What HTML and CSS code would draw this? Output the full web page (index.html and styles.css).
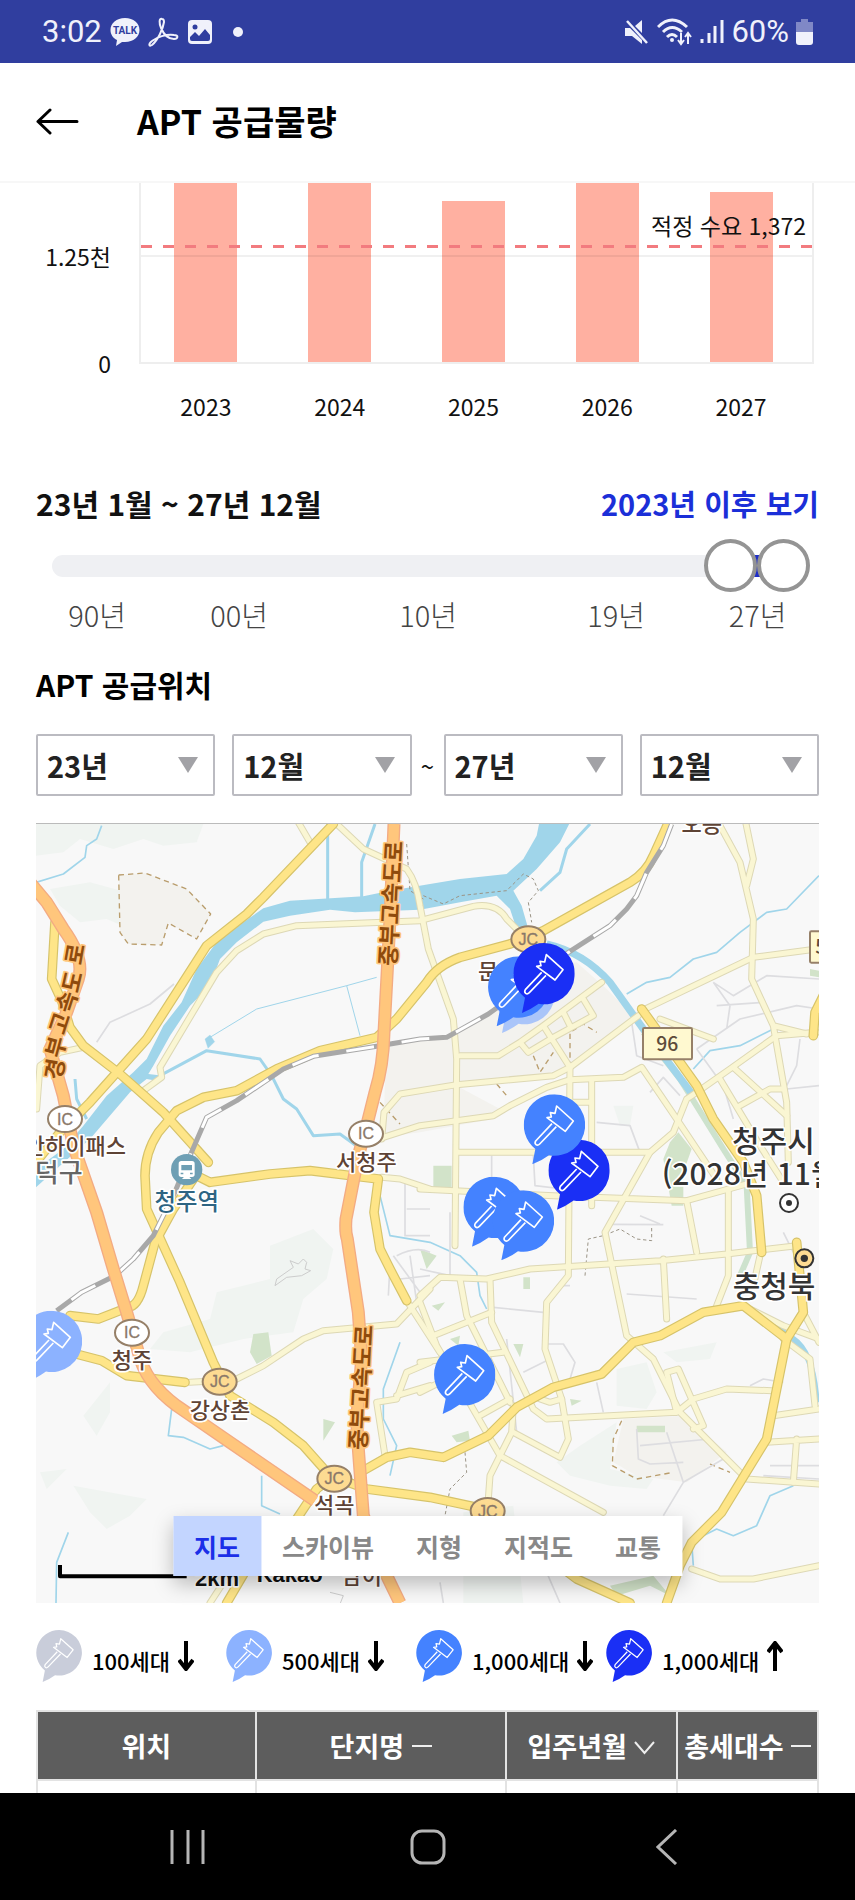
FILE: index.html
```html
<!DOCTYPE html>
<html lang="ko">
<head>
  <meta charset="UTF-8" />
  <meta name="viewport" content="width=device-width, initial-scale=1.0"/>
  <title>APT 공급물량</title>
  <link rel="stylesheet" href="styles.css">
</head>
<body>

  <!-- Shared pin symbol -->
  <svg class="defs" aria-hidden="true">
    <symbol id="pin" viewBox="0 0 184 210">
      <path fill="currentColor" d="M92 0a92 92 0 1 1-16 182.500Q52 200 26 210L35 164A92 92 0 0 1 92 0z"/>
      <path fill="none" stroke="#fff" stroke-width="5" stroke-linejoin="round" d="M99 35L149 80L125 111L70 70L83 68L80 55L94 57ZM85 88L36 140Q32 147 37 151Q42 155 48 149L98 97"/>
    </symbol>
  </svg>

  <div class="statusbar">
    <div class="status-left">
      <span>3:02</span>
      <svg class="talk" width="30" height="28" viewBox="0 0 30 28">
        <path fill="#f0f1fb" d="M15 0C23.500 0 29.500 5.300 29.500 12S23.500 24 15 24l-3 0L6 28l1-6C3 20 .5 16.500 .5 12 .5 5.300 6.500 0 15 0z"/>
        <text x="15" y="16" text-anchor="middle">TALK</text>
      </svg>
      <svg width="31" height="30" viewBox="0 0 31 30" fill="none" stroke="#f0f1fb" stroke-width="2">
        <path d="M14 2c-3-1-3 4-1 9 3 7 8 11 13 11 4 0 5-4 0-4-8-1-17 2-22 6-4 3-3 6 0 4C10 23 15 12 16 5c0-2-1-3-2-3z"/>
      </svg>
      <svg width="26" height="26" viewBox="0 0 26 26">
        <rect x="1" y="1" width="24" height="24" rx="4" fill="#f0f1fb"/>
        <circle cx="8" cy="8" r="2.500" fill="#303e9f"/>
        <path d="M3 18l5-5 4 4 6-7 5 6v4q0 2-2 2H5q-2 0-2-2z" fill="#303e9f"/>
      </svg>
      <i class="dot"></i>
    </div>
    <div class="status-right">
      <svg width="26" height="26" viewBox="0 0 26 26" fill="#f0f1fb">
        <path d="M1 9h5l3 3 9 9v4L8 17H1zM11 7l7-6v13z"/>
        <path d="M3 2l20 22" stroke="#f0f1fb" stroke-width="2.500"/>
      </svg>
      <svg width="36" height="28" viewBox="0 0 36 28" fill="none" stroke="#f0f1fb" stroke-width="3">
        <path d="M1 9q14-14 29 0M6 14q9-9 19 0M10 19q5-5 10 0"/>
        <circle cx="15" cy="22" r="2" fill="#f0f1fb" stroke="none"/>
        <path stroke-width="2" d="M24 15v10M21 22l3 4 3-4M31 26V16M28 19l3-4 3 4"/>
      </svg>
      <svg width="24" height="26" viewBox="0 0 24 26" stroke="#f0f1fb" stroke-width="3">
        <path d="M2 20v4M9 14v10M15 7v17M22 1v23"/>
      </svg>
      <span>60%</span>
      <svg width="17" height="26" viewBox="0 0 17 26">
        <path d="M5 0h7v3h5v10H0V3h5z" fill="#8088c6"/>
        <path d="M0 13h17v10q0 3-3 3H3q-3 0-3-3z" fill="#f0f1fb"/>
      </svg>
    </div>
  </div>

  <header>
    <button class="back" aria-label="뒤로">
      <svg width="43" height="27" viewBox="0 0 43 27" fill="none" stroke="#000" stroke-width="3" stroke-linecap="round" stroke-linejoin="round">
        <path d="M41 13.500H2M14 2L2 13.500 14 25"/>
      </svg>
    </button>
    <h1>APT 공급물량</h1>
  </header>

  <main>
    <!-- Chart -->
    <section class="chart">
      <div class="axis"><span>1.25천</span><span>0</span></div>
      <div class="plot">
        <div class="bar" style="height: 100%"></div>
        <div class="bar" style="height: 100%"></div>
        <div class="bar" style="height: 90%"></div>
        <div class="bar" style="height: 100%"></div>
        <div class="bar" style="height: 95%"></div>
        <div class="gridline"></div>
        <svg class="demand" width="100%" height="3"><path d="M0 1.500H2000"/></svg>
        <span class="demand-label">적정 수요 1,372</span>
      </div>
      <div class="years">
        <span>2023</span><span>2024</span><span>2025</span><span>2026</span><span>2027</span>
      </div>
    </section>

    <!-- Range -->
    <section>
      <div class="range-head">
        <h2>23년 1월 ~ 27년 12월</h2>
        <a href="#">2023년 이후 보기</a>
      </div>
      <div class="slider">
        <div class="track"><span></span></div>
        <input type="range" min="0" max="40" value="37" aria-label="시작">
        <input type="range" min="0" max="40" value="40" aria-label="끝">
      </div>
      <div class="ticks">
        <span>90년</span><span>00년</span><span>10년</span><span>19년</span><span>27년</span>
      </div>
    </section>

    <!-- Location -->
    <section>
      <h2 class="place">APT 공급위치</h2>
      <div class="selects">
        <div class="pair">
          <label class="select"><select aria-label="시작 연도"><option>23년</option></select></label>
          <label class="select"><select aria-label="시작 월"><option>12월</option></select></label>
        </div>
        <span class="tilde">~</span>
        <div class="pair">
          <label class="select"><select aria-label="종료 연도"><option>27년</option></select></label>
          <label class="select"><select aria-label="종료 월"><option>12월</option></select></label>
        </div>
      </div>

      <div class="map">
        <svg viewBox="18 15 2349 2337" preserveAspectRatio="xMidYMid slice">
          <defs>
            <g id="highway">
              <path d="M0 190L50 250 100 330Q165 420 145 480L110 580 60 690 100 830 130 980 200 1180 250 1350 290 1480 325 1600Q345 1690 440 1760L600 1870 855 2045"/>
              <path d="M1092 15L1080 300 1062 640Q1060 740 1035 820L1010 920 985 1010 948 1200Q945 1240 952 1260L985 1480 995 1620 980 1800 985 1890 1000 2090 1070 2270 1110 2352"/>
            </g>
            <g id="major">
              <path d="M910 15L700 235 650 285 530 380 350 660 180 850 90 940 18 1030"/>
              <path d="M75 310L65 480 95 545 120 625 160 680 270 765 400 880 535 1030"/>
              <path d="M480 1060L540 1090 720 1065 840 1055 1045 1080 1032 1180 1050 1290 1080 1350 1130 1445"/>
              <path d="M1920 0L1870 110Q1850 160 1800 190L1540 335 1440 375 1290 415Q1220 440 1190 490L1100 600 1040 655 870 695 740 750 620 815 520 835 440 875 385 940Q345 1000 345 1070L350 1170 450 1390 550 1630 600 1730 730 1810 820 1880 900 1970 1010 2010 1200 2035 1340 2065"/>
              <path d="M490 1080L430 1170 375 1270 340 1400Q325 1460 295 1465L205 1500 120 1490"/>
              <path d="M120 1600L215 1625 290 1670 465 1690"/>
              <path d="M800 2100L860 2010 900 1980M1000 1955L1070 1915 1140 1900 1240 1915 1375 1850 1460 1765 1570 1705 1715 1665 1810 1570 1890 1550 2020 1480 2140 1460 2270 1560"/>
              <path d="M2300 1270L2320 1480 2270 1560 2210 1860 2075 2080 1985 2170 1950 2240 1910 2352"/>
              <path d="M1835 570L1900 660 2000 800 2050 900 2140 1030 2180 1130 2195 1300"/>
              <path d="M1600 2250L1640 2280 1800 2352M650 2250L590 2352M2350 650L2355 580 2380 530"/>
            </g>
            <g id="minor">
              <path d="M340 815L395 775 390 745 560 460 620 395 700 345 800 320 1170 305 1330 262Q1400 250 1430 300L1480 350"/>
              <path d="M915 10L1000 90 1130 150Q1160 190 1170 260L1195 390 1270 600 1280 720 1275 1280M805 10L840 70"/>
              <path d="M20 870L30 740 90 700 160 685M1055 960L1062 880 1110 825 1280 797 1570 770 1620 745 1825 590"/>
              <path d="M1060 955L1170 920 1390 890 1440 860 1550 805 1620 782 1780 775 1835 745 1940 900 2060 1080"/>
              <path d="M1290 710L1405 710 1470 670 1540 620 1715 490M1470 670L1495 700 1570 655 1690 590 1660 540M1540 620L1620 745M1600 580L1620 620"/>
              <path d="M1620 740L1615 1370 1550 1450 1545 1590 1595 1740 1615 1860 1590 1915 1450 1840M1685 785L1685 1160M1620 850L1685 850"/>
              <path d="M1280 1000L1860 1000 1930 940 1970 840 2000 820 2100 750 2240 650 2360 640M1835 575L2170 415 2360 390"/>
              <path d="M2070 20L2130 130 2170 300 2165 480 2230 620 2270 850 2275 1030M2145 0L2170 120 2150 200M2230 620L2330 645"/>
              <path d="M2110 745L2270 890M2070 780L2190 980 2260 1090M2130 860L2220 810 2260 810"/>
              <path d="M1170 1110L1570 1130 1970 1145 2150 1095M1860 1000L1725 1240 1790 1550 1870 1620 1950 1780 2150 1980 2367 1995"/>
              <path d="M1170 1430L1230 1375 1370 1380 1500 1350 1890 1325 2090 1305 2300 1280M1900 1320L1910 1500M1970 1145L2000 1300M2095 1110L2095 1370 2060 1460M2190 1310L2170 1400"/>
              <path d="M2150 1465L2260 1520 2367 1560M2320 1480L2367 1570M2260 1560L2340 1620 2355 1760"/>
              <path d="M1290 1380L1310 1490 1440 1750M1380 1380L1385 1510 1510 1770 1550 1800 1940 1780 1990 1740 2090 1710 2225 1715M1940 1780L1910 1660 1945 1650 2020 1820 1990 1830"/>
              <path d="M1170 1450L1220 1580 1410 1910 1720 2080M1170 1630L1420 1600M1210 1550L1385 1480M1170 1720L1230 1690M1450 1760L1445 1840 1410 1910 1380 1970 1375 2040M1350 1790L1440 1740M1530 1740L1560 1750 1595 1740"/>
              <path d="M2210 1870L2367 1860M2230 1790L2367 1770M2300 1860L2290 1990M1985 2250L2070 2280 2170 2280 2367 2240"/>
              <path d="M480 1690L560 1685 620 1680 700 1640 820 1560 880 1535 1100 1515 1200 1410M1130 1445L1230 1600M1040 1750L1100 1740 1130 1660 1200 1630M1040 1750L1065 1910M1100 1730L1200 1700M1055 1075L1110 1080 1200 1110"/>
              <path d="M600 2260L540 2352M1890 600L2050 660"/>
            </g>
          </defs>

          <!-- Land cover -->
          <g class="hill">
            <path d="M18 15H520L500 70 400 80 340 60 250 90 150 60 100 100 18 110zM60 210L180 190 290 220 300 330 230 300 150 310 90 260z"/>
            <path d="M720 1280L850 1230 910 1290 890 1380 820 1440 790 1540 640 1560 480 1600 360 1590 400 1540 540 1500 560 1420 720 1380zM160 1790L240 1690 240 1780 200 1850zM130 2000L350 2040 300 2090 230 2130 180 2080zM30 1960L110 1950 50 2010z"/>
            <path d="M1760 1650L1850 1630 1880 1720 1850 1770 1760 1760zM1900 1600L2060 1570 2040 1620 1940 1630zM1580 1930L1650 1880 1760 1810 1740 1950 1870 1980 1850 2010 1740 2000 1620 1970zM1300 2080L1450 2060 1480 2352H1300zM1750 860h60l-10 60h-30z"/>
          </g>
          <g class="zone">
            <path d="M1068 680L1170 665 1290 640 1400 570 1570 440 1640 430 1730 510 1810 590 1620 740 1500 780 1280 800 1410 870 1390 900 1170 940 1060 955z"/>
            <path class="dash" d="M266 168L345 162 470 210 542 285 500 360 415 312 395 378 295 375 270 340z"/>
            <path d="M1780 1800L1960 1790 2090 1900 1970 1990 1820 1970 1750 1930z"/>
            <path class="dash" fill="none" d="M1775 1805L1750 1860 1747 1940 1820 1980 1930 1960M2040 1935L2100 1960M1620 800V640L1660 615 1700 640M1510 710L1530 760 1570 700M1050 850L1110 915M1400 795L1430 830"/>
          </g>
          <g class="park">
            <path d="M670 1545L715 1540 725 1610 680 1635 660 1600zM880 1800L915 1810 880 1865zM1210 1040h55v70h-55zM1170 1290L1220 1310 1190 1350zM1920 970L1945 940 1985 990 1960 1060 1960 1160 1925 1160 1900 1020zM1480 1375h20v35h-20zM1450 1575h30l-10 40zM1260 1560l30-10-5 30zM1265 1850l50-15 5 30-40 5zM1820 1820h85v20h-85zM1620 1740l35 5-30 15zM1205 1460l40-10-20 25zM1740 2300L1870 2270 1920 2330 1860 2300 1760 2330zM2340 450l27 5v20l-27-5z"/>
          </g>

          <!-- Water -->
          <g class="water">
            <path d="M18 1050L100 990 160 920 230 830 310 760 350 720 400 620 455 550 500 450 560 370 640 310 700 268 780 245 1000 232 1080 215 1200 195 1290 180 1430 165 1480 120 1520 50 1530 0H1625L1590 70 1520 150 1450 215 1475 260 1495 330H1460L1440 270 1400 230 1290 250 1170 272 975 280 900 272 780 290 700 308 620 370 570 420 540 500 480 560 420 650 370 740 355 765 400 770 380 785 350 780 300 820 180 960 18 1105z"/>
          </g>
          <path class="bank" d="M1840 640L1950 780 2080 990 2150 1100 2160 1300 2130 1370"/>
          <g class="stream">
            <path stroke-width="22" d="M1550 375Q1660 400 1740 490L1840 630 1990 830"/>
            <path stroke-width="9" d="M893 15V240M1035 15L995 130V240M390 770L530 695 690 720 725 770 760 840 800 870 850 950 930 945 985 985M1680 15L1610 90 1590 160 1530 215M135 780L140 840 170 900"/>
            <path stroke-width="5" d="M18 190L100 165 165 115 170 80 200 60 215 20M1790 525L1850 490 1920 475 1990 420 2060 400 2130 340 2210 280 2270 270 2367 170M1990 750L2040 695 2130 680 2230 630"/>
            <path stroke-width="3" d="M540 655L680 570 950 500 1040 475M950 500L990 650"/>
            <path stroke-width="5" d="M1050 1130L1080 1250 1200 1270 1290 1310 1340 1360 1350 1430 1370 1470M425 1770L415 1850 460 1855 540 1890 580 1880M695 1970L695 2060 750 2085M115 2140L80 2230 78 2352M1110 1570L1060 1710 1060 1800 1100 1880 1080 1970M2000 2160L2060 2130 2110 2150 2180 2120 2220 2030 2290 2000M1985 2170L1990 2240"/>
            <path stroke-width="18" d="M2200 1500L2290 1560Q2350 1600 2360 1750"/>
            <path d="M525 660l15-12 14 20-20 20z" fill="#a0d5ea"/>
          </g>

          <!-- Roads -->
          <path class="street" d="M432 495L360 555 240 610 200 670M1260 1180V1370L1170 1350M1385 1010V1100M1510 1010L1515 1100 1600 1110M1700 910L1800 920 1830 1000M1830 1190L1890 1215M1740 1216L1900 1217M1790 1425L2000 1440M1390 1465L1540 1480M1550 1575L1600 1575 1635 1630 1620 1680M1700 1690L1720 1780M1350 1130V1200M2050 490L2100 560 2090 630M2050 490L2110 530 2210 470 2367 480M2060 560L2200 550M2000 690L2130 600 2300 560 2367 570M2000 690L2080 800 2110 900M1805 610L1820 710 1900 740M1860 820L1900 775 1950 830M2270 810L2367 800M1820 1830L1825 1920 1860 1935 1960 1930M1910 1840L1960 1990 2080 1920M1830 1880L2040 1860M1960 1990L1900 2090M2220 1940H2367M2200 1970L2367 1980M2160 1700L2200 1680 2260 1690M1100 1310Q1160 1280 1200 1300M1090 1310L1170 1420M1080 1340L1075 1430M1110 1380L1200 1370M1140 1310L1160 1450M1125 1080V1250H1200M1130 1170H1200M1580 1400H1620M1430 1560L1460 1840M1480 1660L1560 1620M2260 1240L2290 1300M1230 2290L1240 2352M1550 2260L1590 2352M2310 660L2300 740 2270 800"/>
          <path class="hill-line" d="M735 1400L740 1380 790 1345 780 1325 805 1335 820 1320 830 1330 825 1350 842 1355 815 1370 770 1375zM900 2320l40 10-10 25"/>
          <path class="trail" d="M1180 230L1240 255 1290 230 1430 215 1480 165 1510 180 1525 215 1495 250 1505 310M1130 75L1140 215 1180 240M1305 1900L1310 1960 1260 2010 1245 2090M1665 1370L1675 1260 1720 1250 1770 1230 1820 1260 1865 1265V1220"/>
          <use href="#minor" class="minor-case"/><use href="#minor" class="minor"/>
          <use href="#major" class="major-case"/><use href="#major" class="major"/>
          <g class="rail">
            <path d="M1925 15L1900 80 1850 160 1820 230 1790 270 1740 320 1600 410 1480 510 1375 585 1250 655 1170 660 1040 682 850 712 760 750 620 845 530 895 480 1010 430 1130 370 1250 310 1320 255 1370 155 1420 80 1475"/>
            <path class="sleepers" d="M1925 15L1900 80 1850 160 1820 230 1790 270 1740 320 1600 410 1480 510 1375 585 1250 655 1170 660 1040 682 850 712 760 750 620 845 530 895 480 1010 430 1130 370 1250 310 1320 255 1370 155 1420 80 1475"/>
          </g>
          <use href="#highway" class="highway-case"/><use href="#highway" class="highway"/>

          <!-- Labels -->
          <g class="road-name">
            <text transform="translate(1098 442) rotate(-87)">중부고속도로</text>
            <text transform="translate(1008 1894) rotate(-87)">중부고속도로</text>
            <text transform="translate(94 785) rotate(-80)">경</text>
            <text transform="translate(94 720) rotate(-75)">부</text>
            <text transform="translate(103 650) rotate(-72)">고</text>
            <text transform="translate(124 586) rotate(-72)">속</text>
            <text transform="translate(144 524) rotate(-77)">도</text>
            <text transform="translate(154 440) rotate(-80)">로</text>
          </g>
          <g class="badge">
            <g class="ic"><ellipse cx="105" cy="900" rx="51" ry="39"/><ellipse cx="1008" cy="944" rx="51" ry="39"/><ellipse cx="306" cy="1541" rx="51" ry="39"/></g>
            <g class="jc"><ellipse cx="1495" cy="361" rx="51" ry="39"/><ellipse cx="569" cy="1688" rx="51" ry="39"/><ellipse cx="913" cy="1979" rx="51" ry="39"/><ellipse cx="1373" cy="2076" rx="51" ry="39"/></g>
            <text x="105" y="917">IC</text><text x="1008" y="961">IC</text><text x="306" y="1558">IC</text>
            <text x="1495" y="378">JC</text><text x="569" y="1705">JC</text><text x="913" y="1996">JC</text><text x="1373" y="2093">JC</text>
          </g>
          <g class="route">
            <rect x="1839" y="627" width="147" height="94" rx="4"/><rect x="2340" y="337" width="100" height="94" rx="4"/>
            <text x="1912" y="697">96</text><text x="2372" y="406">5</text>
          </g>
          <circle cx="470" cy="1052" r="47" fill="#6e9fb4"/>
          <path fill="#fff" d="M454 1026h32q8 0 8 8v32q0 8-8 8H454q-8 0-8-8v-32q0-8 8-8zM456 1080l8-8h12l8 8z"/>
          <path fill="#6e9fb4" d="M454 1038h32v16H454zM452 1061h8v5h-8zM480 1061h8v5h-8z"/>
          <g class="place-name">
            <text x="136" y="1005">안하이패스</text>
            <text x="1009" y="1052">서청주</text>
            <text x="306" y="1648">청주</text>
            <text x="570" y="1796">강상촌</text>
            <text x="913" y="2083">석곡</text>
            <text x="995" y="2296">남이</text>
            <text x="2015" y="40">오동</text>
            <text x="1405" y="480" text-anchor="middle">문암</text>
            <text class="station" x="470" y="1174">청주역</text>
            <text class="gu" x="86" y="1090">덕구</text>
          </g>
          <g class="city">
            <text x="2106" y="998">청주시</text>
            <text x="1895" y="1097">(2028년 11월</text>
            <text x="2108" y="1435">충청북</text>
            <circle cx="2277" cy="1152" r="27"/><circle class="core" cx="2277" cy="1152" r="9"/>
            <circle class="province" cx="2323" cy="1318" r="27"/><circle class="core" cx="2323" cy="1318" r="11"/>
          </g>
          <path d="M90 2238V2272H470" fill="none" stroke="#000" stroke-width="12"/>
          <g class="scale"><text x="495" y="2300">2km</text><text x="680" y="2290">Kakao</text></g>

          <!-- Pins -->
          <use href="#pin" class="p500" x="1390" y="432" width="184" height="210" opacity=".7"/>
          <use href="#pin" class="p999" x="1374" y="412" width="184" height="210"/>
          <use href="#pin" class="p1000" x="1450" y="372" width="184" height="210"/>
          <use href="#pin" class="p1000" x="1555" y="962" width="184" height="210"/>
          <use href="#pin" class="p999" x="1481" y="826" width="184" height="210"/>
          <use href="#pin" class="p999" x="1300" y="1073" width="184" height="210"/>
          <use href="#pin" class="p999" x="1388" y="1114" width="184" height="210"/>
          <use href="#pin" class="p999" x="1212" y="1575" width="184" height="210"/>
          <use href="#pin" class="p500" x="-28" y="1475" width="184" height="210"/>
        </svg>
        <div class="map-tabs">
          <button class="active">지도</button>
          <button>스카이뷰</button>
          <button>지형</button>
          <button>지적도</button>
          <button>교통</button>
        </div>
      </div>

      <div class="legend">
        <div><svg class="p100" width="46" height="52"><use href="#pin"/></svg><span>100세대</span><svg class="arrow" width="16" height="30"><path d="M8 0V27M1 19l7 9 7-9"/></svg></div>
        <div><svg class="p500" width="46" height="52"><use href="#pin"/></svg><span>500세대</span><svg class="arrow" width="16" height="30"><path d="M8 0V27M1 19l7 9 7-9"/></svg></div>
        <div><svg class="p999" width="46" height="52"><use href="#pin"/></svg><span>1,000세대</span><svg class="arrow" width="16" height="30"><path d="M8 0V27M1 19l7 9 7-9"/></svg></div>
        <div><svg class="p1000" width="46" height="52"><use href="#pin"/></svg><span>1,000세대</span><svg class="arrow" width="16" height="30"><path d="M8 30V3M1 11l7-9 7 9"/></svg></div>
      </div>
    </section>

    <!-- List -->
    <table>
      <thead>
        <tr>
          <th class="w-area">위치</th>
          <th class="w-name">단지명 <svg width="20" height="12"><path d="M0 3H20"/></svg></th>
          <th class="w-date">입주년월 <svg width="21" height="14"><path d="M1 1L10.500 12 20 1"/></svg></th>
          <th class="w-total">총세대수 <svg width="20" height="12"><path d="M0 3H20"/></svg></th>
        </tr>
      </thead>
      <tbody>
        <tr><td></td><td></td><td></td><td></td></tr>
      </tbody>
    </table>
  </main>

  <nav>
    <button aria-label="최근 앱"><svg width="36" height="36"><path d="M2 1V35M18 1V35M33 1V35"/></svg></button>
    <button aria-label="홈"><svg width="36" height="36"><rect x="2" y="2" width="32" height="32" rx="10"/></svg></button>
    <button aria-label="뒤로"><svg width="22" height="36"><path d="M20 1L2 18 20 35"/></svg></button>
  </nav>
</body>
</html>
```
FILE: styles.css
```css
* {
  box-sizing: border-box;
}
body {
  font-family: "Noto Sans CJK KR", sans-serif;
  color: #111;
  background: #fff;
  margin: 0;
  height: 100vh;
  display: flex;
  flex-direction: column;
}
button {
  border: none;
  background: none;
  padding: 0;
  font-family: inherit;
  cursor: pointer;
}
svg {
  display: block;
  flex: none;
}
h1, h2 {
  margin: 0;
}
.defs {
  position: absolute;
  width: 0;
  height: 0;
}

/* Status bar */
.statusbar {
  display: flex;
  justify-content: space-between;
  align-items: center;
  height: 63px;
  flex: none;
  padding: 0 42px;
  background: #303e9f;
  color: #f0f1fb;
  font-family: Roboto, sans-serif;
  font-size: 31px;
}
.status-left, .status-right {
  display: flex;
  align-items: center;
  gap: 8px;
}
.status-right {
  gap: 7px;
}
.talk text {
  font: bold 10px Roboto, sans-serif;
  fill: #303e9f;
}
.dot {
  width: 10px;
  height: 10px;
  border-radius: 50%;
  background: #f0f1fb;
  margin-left: 12px;
}

header {
  display: flex;
  align-items: center;
  gap: 58px;
  flex: none;
  height: 120px;
  padding: 0 36px 2px;
  border-bottom: 2px solid #f7f7f7;
}
h1 {
  font-size: 34px;
  line-height: 50px;
  font-weight: bold;
  color: #000;
}

main {
  flex: 1;
  min-height: 0;
  overflow: hidden;
  padding: 0 36px;
}

/* Chart */
.chart {
  display: grid;
  grid-template-columns: 103px 1fr;
  font-size: 23px;
  line-height: 36px;
  padding-right: 5px;
}
.axis {
  display: flex;
  flex-direction: column;
  justify-content: space-between;
  height: 198px;
  padding: 55px 28px 0 0;
  text-align: right;
  grid-row: span 2;
}
.plot {
  position: relative;
  display: grid;
  grid-template-columns: repeat(5, 1fr);
  align-items: end;
  justify-items: center;
  height: 181px;
  border: solid #eee;
  border-width: 0 2px 2px;
}
.bar {
  width: 63px;
  margin-right: 6px;
  background: #ffb0a1;
}
.gridline {
  position: absolute;
  left: 0;
  right: 0;
  top: 72px;
  height: 2px;
  background: rgba(0, 0, 0, 0.06);
}
.demand {
  position: absolute;
  left: 0;
  top: 62px;
  stroke: #f27b7f;
  stroke-width: 3;
  stroke-dasharray: 11 11;
}
.demand-label {
  position: absolute;
  right: 6px;
  top: 24px;
}
.years {
  grid-column: 2;
  display: grid;
  grid-template-columns: repeat(5, 1fr);
  text-align: center;
  margin-top: 24px;
  padding-right: 6px;
}

/* Range */
.range-head {
  display: flex;
  justify-content: space-between;
  align-items: center;
  margin-top: 57px;
  line-height: 44px;
}
h2 {
  font-size: 30px;
  line-height: 44px;
  font-weight: bold;
}
.range-head a {
  color: #1b2fd8;
  font-size: 29px;
  font-weight: bold;
  text-decoration: none;
}
.slider {
  display: grid;
  align-items: center;
  margin: 14px 9px 2px 16px;
}
.track, .slider input {
  grid-area: 1 / 1;
}
.track {
  display: flex;
  justify-content: flex-end;
  height: 22px;
  padding-right: 26px;
  border-radius: 11px;
  background: #eff0f3;
}
.track span {
  width: 7%;
  background: #1f2fc8;
}
.slider input {
  appearance: none;
  width: 100%;
  height: 53px;
  margin: 0;
  background: none;
  pointer-events: none;
}
.slider input::-webkit-slider-thumb {
  appearance: none;
  width: 53px;
  height: 53px;
  border: 4px solid #949494;
  border-radius: 50%;
  background: #fff;
  pointer-events: auto;
}
.ticks {
  display: grid;
  grid-template-columns: 122fr 162fr 216fr 160fr 123fr;
  text-align: center;
  font-size: 29px;
  font-weight: 300;
  line-height: 40px;
  color: #444;
}

/* Location */
.place {
  margin: 28px 0;
  color: #000;
}
.selects {
  display: grid;
  grid-template-columns: 1fr 32px 1fr;
  align-items: center;
}
.pair {
  display: grid;
  grid-template-columns: 1fr 1fr;
  gap: 17px;
}
.select {
  position: relative;
}
.select select {
  appearance: none;
  width: 100%;
  height: 62px;
  padding: 0 9px;
  border: 2px solid #bbbbc1;
  border-radius: 2px;
  background: #fff;
  color: #222;
  font: bold 29px "Noto Sans CJK KR", sans-serif;
}
.select::after {
  content: "";
  position: absolute;
  right: 17px;
  top: 23px;
  border: solid transparent;
  border-width: 16px 10px 0;
  border-top-color: #a2a2a6;
  pointer-events: none;
}
.tilde {
  text-align: center;
  font-size: 24px;
}

/* Map */
.map {
  position: relative;
  margin-top: 27px;
  background: #f8f8f8;
  border-top: 1px solid #bbb;
}
.map > svg {
  width: 100%;
  height: auto;
  fill: none;
  stroke-linejoin: round;
}
.hill { fill: #f0f4f1; }
.zone { fill: #f3f2ee; }
.park { fill: #d2e3c9; }
.water { fill: #a0d5ea; }
.stream { stroke: #a0d5ea; }
.bank { stroke: #cde2cd; stroke-width: 18; }
.dash { stroke: #b99d6c; stroke-width: 4; stroke-dasharray: 16 12; }
.trail { stroke: #9b9486; stroke-width: 3; stroke-dasharray: 10 8; }
.street { stroke: #dddde0; stroke-width: 5; }
.hill-line { stroke: #ccc; stroke-width: 3; }
.minor-case { stroke: #ddd8b5; stroke-width: 21; stroke-linecap: round; }
.minor { stroke: #faf6d3; stroke-width: 15; stroke-linecap: round; }
.major-case { stroke: #d6c36a; stroke-width: 29; stroke-linecap: round; }
.major { stroke: #fee588; stroke-width: 22; stroke-linecap: round; }
.highway-case { stroke: #f3ab83; stroke-width: 39; }
.highway { stroke: #ffc67c; stroke-width: 31; }
.rail { stroke: #a8a8a8; stroke-width: 15; }
.sleepers { stroke: #fff; stroke-width: 9; stroke-dasharray: 84 84; }

.map text {
  paint-order: stroke;
  stroke: #fff;
  stroke-width: 10px;
}
.map .road-name text {
  font-size: 68px;
  font-weight: bold;
  fill: #8f4b0c;
  stroke: #ffc67c;
}
.badge { stroke: #968068; stroke-width: 6; }
.ic { fill: #fff; }
.jc { fill: #fddb92; }
.map .badge text {
  font: 48px "Liberation Sans", sans-serif;
  fill: #8a7869;
  stroke: #8a7869;
  stroke-width: 1px;
  text-anchor: middle;
}
.route rect { fill: #fff9d0; stroke: #968068; stroke-width: 6; }
.map .route text {
  font-size: 58px;
  font-weight: 500;
  fill: #5d4b3a;
  stroke: none;
  text-anchor: middle;
}
.place-name text {
  font-size: 66px;
  font-weight: 500;
  fill: #5e4335;
  text-anchor: middle;
}
.place-name .station { font-size: 70px; fill: #2e6583; }
.place-name .gu { font-size: 78px; fill: #666; }
.city text {
  font-size: 90px;
  font-weight: 500;
  fill: #333;
}
.city circle { fill: #fff; stroke: #333; stroke-width: 6; }
.city .province { fill: #fddb92; }
.city .core { fill: #333; stroke: none; }
.scale text {
  font: bold 66px "Liberation Sans", sans-serif;
  fill: #111;
}

.p100 { color: #c9cdda; }
.p500 { color: #8cb2ff; }
.p999 { color: #4482ff; }
.p1000 { color: #1a2ff5; }

.map-tabs {
  position: absolute;
  left: 50%;
  bottom: 27px;
  transform: translateX(-50%);
  display: flex;
  background: #fff;
  box-shadow: 0 8px 20px rgba(0, 0, 0, 0.25);
}
.map-tabs button {
  height: 60px;
  padding: 0 21px;
  font-size: 25px;
  font-weight: bold;
  color: #888;
  white-space: nowrap;
}
.map-tabs .active {
  background: #c3d5ff;
  color: #1b2fe8;
}

.legend {
  display: grid;
  grid-template-columns: 190fr 190fr 190fr 213fr;
  margin: 27px 0 28px;
  font-size: 22px;
  font-weight: 500;
  color: #000;
}
.legend div {
  display: flex;
  align-items: center;
  white-space: nowrap;
}
.legend span {
  margin: 8px 8px 0 10px;
}
.arrow {
  fill: none;
  stroke: #000;
  stroke-width: 4;
}

/* List */
table {
  width: 100%;
  table-layout: fixed;
  border-collapse: collapse;
}
th, td {
  border: 2px solid #e3e3e3;
  padding: 0;
  height: 69px;
}
th {
  background: #5d5d5d;
  color: #fff;
  font-size: 27px;
  font-weight: bold;
  white-space: nowrap;
}
th svg {
  display: inline-block;
  fill: none;
  stroke: #eee;
  stroke-width: 2;
  vertical-align: 2px;
}
.w-area { width: 28%; }
.w-name { width: 32%; }
.w-date { width: 22%; }
.w-total { width: 18%; }

nav {
  display: grid;
  grid-template-columns: repeat(3, 1fr);
  flex: none;
  height: 107px;
  padding: 0 8%;
  background: #000;
}
nav button {
  display: grid;
  place-items: center;
}
nav svg {
  fill: none;
  stroke: #b5b5b5;
  stroke-width: 3;
}
```
